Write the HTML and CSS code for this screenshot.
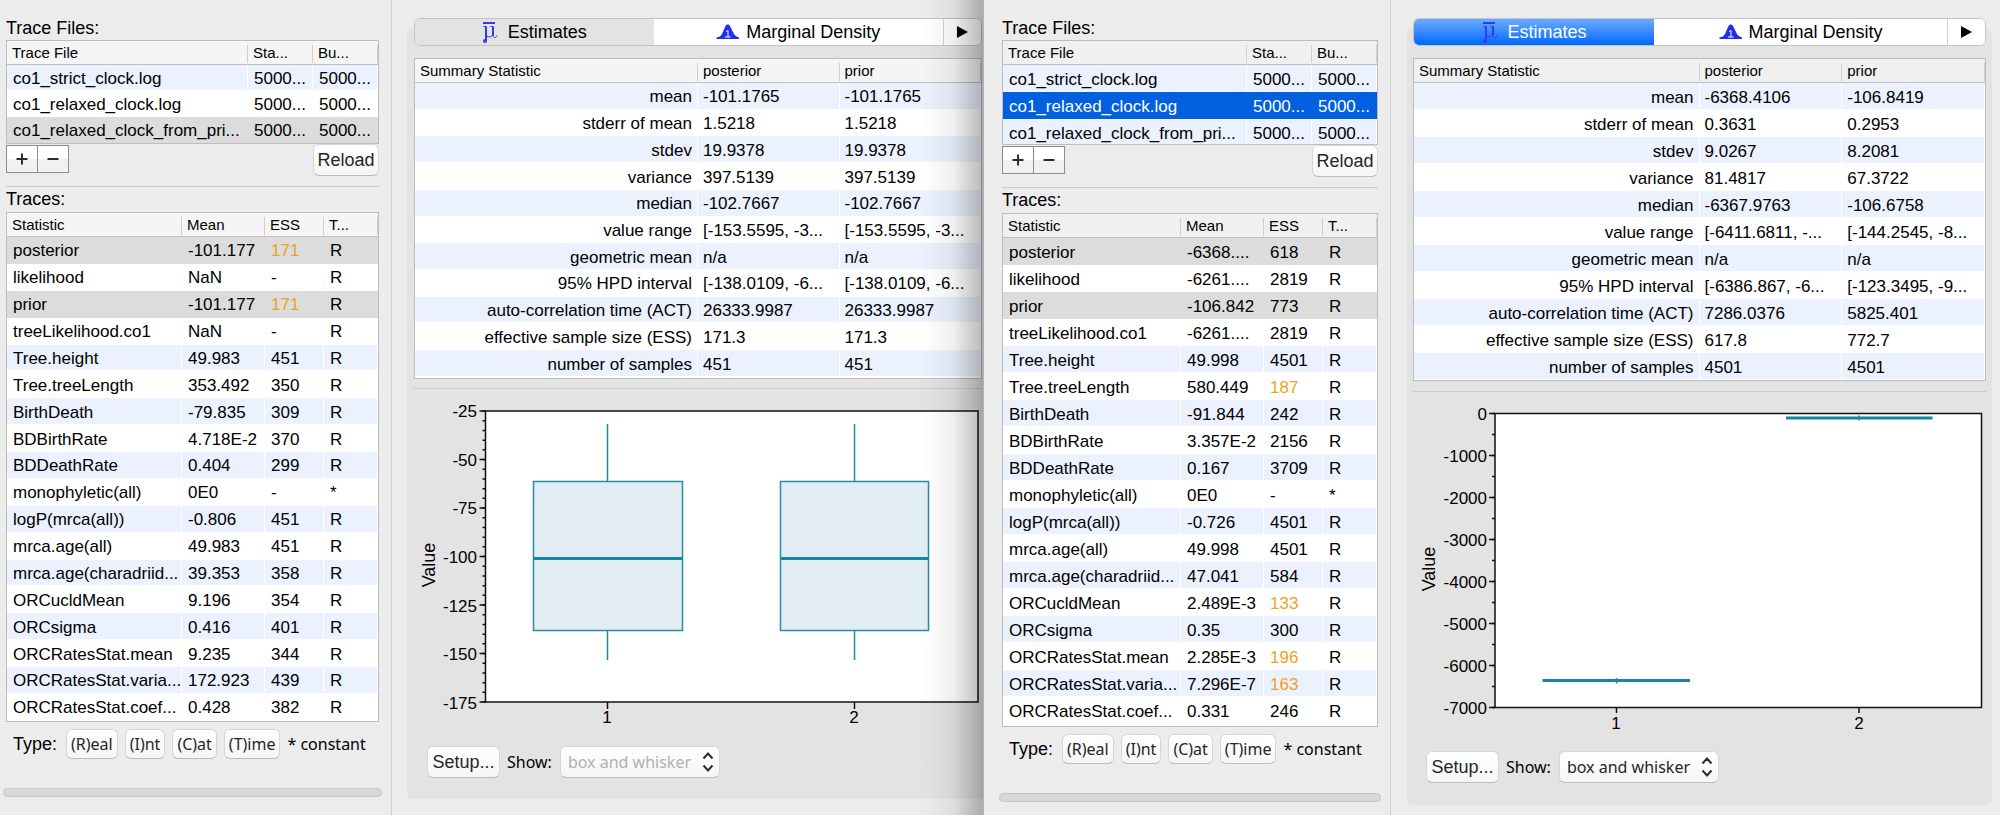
FILE: index.html
```html
<!DOCTYPE html>
<html lang="en">
<head>
<meta charset="utf-8">
<title>Tracer</title>
<link rel="stylesheet" href="styles.css">
</head>
<body>
<div class="desktop">
<section class="window window-back">
  <aside class="sidebar">
    <h2 class="label">Trace Files:</h2>
    <div class="box files">
      <table class="grid">
        <colgroup><col><col class="c65"><col class="c65"></colgroup>
        <thead><tr><th>Trace File</th><th>Sta...</th><th>Bu...</th></tr></thead>
        <tbody>
          <tr class="blue"><td>co1_strict_clock.log</td><td>5000...</td><td>5000...</td></tr>
          <tr><td>co1_relaxed_clock.log</td><td>5000...</td><td>5000...</td></tr>
          <tr class="gray"><td>co1_relaxed_clock_from_pri...</td><td>5000...</td><td>5000...</td></tr>
        </tbody>
      </table>
    </div>
    <div class="file-actions">
      <div class="plusminus">
        <button type="button" aria-label="Add"><svg width="12" height="12" viewBox="0 0 12 12"><path d="M0.500 6H11.500M6 0.500V11.500"/></svg></button>
        <button type="button" aria-label="Remove"><svg width="12" height="12" viewBox="0 0 12 12"><path d="M0.500 6H11.500"/></svg></button>
      </div>
      <button type="button" class="btn reload">Reload</button>
    </div>
    <hr class="rule">
    <h2 class="label traces-label">Traces:</h2>
    <div class="box traces">
      <table class="grid">
        <colgroup><col><col class="c83"><col class="c59"><col class="c54"></colgroup>
        <thead><tr><th>Statistic</th><th>Mean</th><th>ESS</th><th>T...</th></tr></thead>
        <tbody>
          <tr class="gray"><td>posterior</td><td>-101.177</td><td class="low">171</td><td>R</td></tr>
          <tr><td>likelihood</td><td>NaN</td><td>-</td><td>R</td></tr>
          <tr class="gray"><td>prior</td><td>-101.177</td><td class="low">171</td><td>R</td></tr>
          <tr><td>treeLikelihood.co1</td><td>NaN</td><td>-</td><td>R</td></tr>
          <tr class="blue"><td>Tree.height</td><td>49.983</td><td>451</td><td>R</td></tr>
          <tr><td>Tree.treeLength</td><td>353.492</td><td>350</td><td>R</td></tr>
          <tr class="blue"><td>BirthDeath</td><td>-79.835</td><td>309</td><td>R</td></tr>
          <tr><td>BDBirthRate</td><td>4.718E-2</td><td>370</td><td>R</td></tr>
          <tr class="blue"><td>BDDeathRate</td><td>0.404</td><td>299</td><td>R</td></tr>
          <tr><td>monophyletic(all)</td><td>0E0</td><td>-</td><td>*</td></tr>
          <tr class="blue"><td>logP(mrca(all))</td><td>-0.806</td><td>451</td><td>R</td></tr>
          <tr><td>mrca.age(all)</td><td>49.983</td><td>451</td><td>R</td></tr>
          <tr class="blue"><td>mrca.age(charadriid...</td><td>39.353</td><td>358</td><td>R</td></tr>
          <tr><td>ORCucldMean</td><td>9.196</td><td>354</td><td>R</td></tr>
          <tr class="blue"><td>ORCsigma</td><td>0.416</td><td>401</td><td>R</td></tr>
          <tr><td>ORCRatesStat.mean</td><td>9.235</td><td>344</td><td>R</td></tr>
          <tr class="blue"><td>ORCRatesStat.varia...</td><td>172.923</td><td>439</td><td>R</td></tr>
          <tr><td>ORCRatesStat.coef...</td><td>0.428</td><td>382</td><td>R</td></tr>
        </tbody>
      </table>
    </div>
    <div class="types">
      <span class="type-label">Type:</span>
      <button type="button" class="btn small">(R)eal</button>
      <button type="button" class="btn small">(I)nt</button>
      <button type="button" class="btn small">(C)at</button>
      <button type="button" class="btn small">(T)ime</button>
      <span class="constant">* constant</span>
    </div>
    <div class="progress" role="progressbar" aria-label="Progress"></div>
  </aside>
  <main class="main">
    <div class="group">
      <div class="tabs" role="tablist">
        <button type="button" class="tab selected" role="tab" aria-selected="true"><svg class="mu" width="16" height="23" viewBox="0 0 16 23"><path class="mu-bar" d="M1 2H13"/><path class="mu-stem" d="M4 5.500V20M11 5.500V14.500"/><path class="mu-fine" d="M1.500 5.500H4M8.500 5.500H11M4 13.500Q5 16.500 8 16Q10.500 15.500 11 13Q11 17 13.500 16.500Q14.500 16 15 14.500"/><circle cx="3" cy="20" r="2"/></svg>Estimates</button>
        <button type="button" class="tab" role="tab" aria-selected="false"><svg class="bell" width="24" height="16" viewBox="0 0 24 16"><path d="M0.500 15V13.500Q4.500 13 6 10L9 3Q9.600 1 11 0.500H12.500Q14 1 15 4L18 10Q19.500 13 23 13.500V15Z"/><path class="bell-cut" d="M9 13H14.500M12 13V6.500L10 7.500"/></svg>Marginal Density</button>
        <button type="button" class="tab more" aria-label="More tabs"><svg width="11" height="12" viewBox="0 0 11 12"><path d="M0 0L11 6L0 12Z"/></svg></button>
      </div>
      <div class="box stats">
        <table class="grid">
          <colgroup><col class="half"><col><col></colgroup>
          <thead><tr><th>Summary Statistic</th><th>posterior</th><th>prior</th></tr></thead>
          <tbody>
            <tr class="blue"><td>mean</td><td>-101.1765</td><td>-101.1765</td></tr>
            <tr><td>stderr of mean</td><td>1.5218</td><td>1.5218</td></tr>
            <tr class="blue"><td>stdev</td><td>19.9378</td><td>19.9378</td></tr>
            <tr><td>variance</td><td>397.5139</td><td>397.5139</td></tr>
            <tr class="blue"><td>median</td><td>-102.7667</td><td>-102.7667</td></tr>
            <tr><td>value range</td><td>[-153.5595, -3...</td><td>[-153.5595, -3...</td></tr>
            <tr class="blue"><td>geometric mean</td><td>n/a</td><td>n/a</td></tr>
            <tr><td>95% HPD interval</td><td>[-138.0109, -6...</td><td>[-138.0109, -6...</td></tr>
            <tr class="blue"><td>auto-correlation time (ACT)</td><td>26333.9987</td><td>26333.9987</td></tr>
            <tr><td>effective sample size (ESS)</td><td>171.3</td><td>171.3</td></tr>
            <tr class="blue"><td>number of samples</td><td>451</td><td>451</td></tr>
          </tbody>
        </table>
      </div>
      <hr class="rule">
      <svg class="chart" viewBox="0 0 568 348" role="img" aria-label="Box and whisker plot">
        <rect class="frame" x="71.500" y="22" width="492.500" height="291"/>
        <path class="ticks" stroke-width="6" stroke-dasharray="1.500 47" d="M68.500 21.300V314"/>
        <path class="ticks" stroke-width="3" stroke-dasharray="1.500 8.200" d="M70 21.300V314"/>
        <path class="axis" d="M193.500 313V320M440.500 313V320"/>
        <g class="tick-text">
          <text x="63" y="28">-25</text><text x="63" y="77">-50</text><text x="63" y="125">-75</text><text x="63" y="174">-100</text><text x="63" y="223">-125</text><text x="63" y="271">-150</text><text x="63" y="320">-175</text>
        </g>
        <g class="cat-text"><text x="193" y="334">1</text><text x="440" y="334">2</text></g>
        <text class="axis-title" transform="translate(21 176) rotate(-90)">Value</text>
        <path class="whisker" d="M193.500 35V271M440.500 35V271"/>
        <rect class="quartile" x="119.500" y="92.500" width="149" height="149"/>
        <rect class="quartile" x="366.500" y="92.500" width="148" height="149"/>
        <path class="median" d="M120 169.500H268M367 169.500H514"/>
      </svg>
      <div class="plot-controls">
        <button type="button" class="btn setup">Setup...</button>
        <label class="show" for="show-a">Show:</label>
        <div class="select"><select id="show-a" disabled><option>box and whisker</option></select><svg width="12" height="20" viewBox="0 0 12 20"><path d="M1.500 6.500L6 1.500L10.500 6.500M1.500 13.500L6 18.500L10.500 13.500"/></svg></div>
      </div>
    </div>
  </main>
  <div class="shade"></div>
</section>

<section class="window window-front">
  <aside class="sidebar">
    <h2 class="label">Trace Files:</h2>
    <div class="box files">
      <table class="grid">
        <colgroup><col><col class="c65"><col class="c65"></colgroup>
        <thead><tr><th>Trace File</th><th>Sta...</th><th>Bu...</th></tr></thead>
        <tbody>
          <tr class="blue"><td>co1_strict_clock.log</td><td>5000...</td><td>5000...</td></tr>
          <tr class="active"><td>co1_relaxed_clock.log</td><td>5000...</td><td>5000...</td></tr>
          <tr class="blue"><td>co1_relaxed_clock_from_pri...</td><td>5000...</td><td>5000...</td></tr>
        </tbody>
      </table>
    </div>
    <div class="file-actions">
      <div class="plusminus">
        <button type="button" aria-label="Add"><svg width="12" height="12" viewBox="0 0 12 12"><path d="M0.500 6H11.500M6 0.500V11.500"/></svg></button>
        <button type="button" aria-label="Remove"><svg width="12" height="12" viewBox="0 0 12 12"><path d="M0.500 6H11.500"/></svg></button>
      </div>
      <button type="button" class="btn reload">Reload</button>
    </div>
    <hr class="rule">
    <h2 class="label traces-label">Traces:</h2>
    <div class="box traces">
      <table class="grid">
        <colgroup><col><col class="c83"><col class="c59"><col class="c54"></colgroup>
        <thead><tr><th>Statistic</th><th>Mean</th><th>ESS</th><th>T...</th></tr></thead>
        <tbody>
          <tr class="gray"><td>posterior</td><td>-6368....</td><td>618</td><td>R</td></tr>
          <tr><td>likelihood</td><td>-6261....</td><td>2819</td><td>R</td></tr>
          <tr class="gray"><td>prior</td><td>-106.842</td><td>773</td><td>R</td></tr>
          <tr><td>treeLikelihood.co1</td><td>-6261....</td><td>2819</td><td>R</td></tr>
          <tr class="blue"><td>Tree.height</td><td>49.998</td><td>4501</td><td>R</td></tr>
          <tr><td>Tree.treeLength</td><td>580.449</td><td class="low">187</td><td>R</td></tr>
          <tr class="blue"><td>BirthDeath</td><td>-91.844</td><td>242</td><td>R</td></tr>
          <tr><td>BDBirthRate</td><td>3.357E-2</td><td>2156</td><td>R</td></tr>
          <tr class="blue"><td>BDDeathRate</td><td>0.167</td><td>3709</td><td>R</td></tr>
          <tr><td>monophyletic(all)</td><td>0E0</td><td>-</td><td>*</td></tr>
          <tr class="blue"><td>logP(mrca(all))</td><td>-0.726</td><td>4501</td><td>R</td></tr>
          <tr><td>mrca.age(all)</td><td>49.998</td><td>4501</td><td>R</td></tr>
          <tr class="blue"><td>mrca.age(charadriid...</td><td>47.041</td><td>584</td><td>R</td></tr>
          <tr><td>ORCucldMean</td><td>2.489E-3</td><td class="low">133</td><td>R</td></tr>
          <tr class="blue"><td>ORCsigma</td><td>0.35</td><td>300</td><td>R</td></tr>
          <tr><td>ORCRatesStat.mean</td><td>2.285E-3</td><td class="low">196</td><td>R</td></tr>
          <tr class="blue"><td>ORCRatesStat.varia...</td><td>7.296E-7</td><td class="low">163</td><td>R</td></tr>
          <tr><td>ORCRatesStat.coef...</td><td>0.331</td><td>246</td><td>R</td></tr>
        </tbody>
      </table>
    </div>
    <div class="types">
      <span class="type-label">Type:</span>
      <button type="button" class="btn small">(R)eal</button>
      <button type="button" class="btn small">(I)nt</button>
      <button type="button" class="btn small">(C)at</button>
      <button type="button" class="btn small">(T)ime</button>
      <span class="constant">* constant</span>
    </div>
    <div class="progress" role="progressbar" aria-label="Progress"></div>
  </aside>
  <main class="main">
    <div class="group">
      <div class="tabs" role="tablist">
        <button type="button" class="tab selected" role="tab" aria-selected="true"><svg class="mu" width="16" height="23" viewBox="0 0 16 23"><path class="mu-bar" d="M1 2H13"/><path class="mu-stem" d="M4 5.500V20M11 5.500V14.500"/><path class="mu-fine" d="M1.500 5.500H4M8.500 5.500H11M4 13.500Q5 16.500 8 16Q10.500 15.500 11 13Q11 17 13.500 16.500Q14.500 16 15 14.500"/><circle cx="3" cy="20" r="2"/></svg>Estimates</button>
        <button type="button" class="tab" role="tab" aria-selected="false"><svg class="bell" width="24" height="16" viewBox="0 0 24 16"><path d="M0.500 15V13.500Q4.500 13 6 10L9 3Q9.600 1 11 0.500H12.500Q14 1 15 4L18 10Q19.500 13 23 13.500V15Z"/><path class="bell-cut" d="M9 13H14.500M12 13V6.500L10 7.500"/></svg>Marginal Density</button>
        <button type="button" class="tab more" aria-label="More tabs"><svg width="11" height="12" viewBox="0 0 11 12"><path d="M0 0L11 6L0 12Z"/></svg></button>
      </div>
      <div class="box stats">
        <table class="grid">
          <colgroup><col class="half"><col><col></colgroup>
          <thead><tr><th>Summary Statistic</th><th>posterior</th><th>prior</th></tr></thead>
          <tbody>
            <tr class="blue"><td>mean</td><td>-6368.4106</td><td>-106.8419</td></tr>
            <tr><td>stderr of mean</td><td>0.3631</td><td>0.2953</td></tr>
            <tr class="blue"><td>stdev</td><td>9.0267</td><td>8.2081</td></tr>
            <tr><td>variance</td><td>81.4817</td><td>67.3722</td></tr>
            <tr class="blue"><td>median</td><td>-6367.9763</td><td>-106.6758</td></tr>
            <tr><td>value range</td><td>[-6411.6811, -...</td><td>[-144.2545, -8...</td></tr>
            <tr class="blue"><td>geometric mean</td><td>n/a</td><td>n/a</td></tr>
            <tr><td>95% HPD interval</td><td>[-6386.867, -6...</td><td>[-123.3495, -9...</td></tr>
            <tr class="blue"><td>auto-correlation time (ACT)</td><td>7286.0376</td><td>5825.401</td></tr>
            <tr><td>effective sample size (ESS)</td><td>617.8</td><td>772.7</td></tr>
            <tr class="blue"><td>number of samples</td><td>4501</td><td>4501</td></tr>
          </tbody>
        </table>
      </div>
      <hr class="rule">
      <svg class="chart" viewBox="0 0 573 350" role="img" aria-label="Box and whisker plot">
        <rect class="frame" x="82" y="21.500" width="486.500" height="294"/>
        <path class="ticks" stroke-width="6" stroke-dasharray="1.500 40.500" d="M79 20.800V316.500"/>
        <path class="ticks" stroke-width="3" stroke-dasharray="1.500 19.500" d="M80.500 20.800V316.500"/>
        <path class="axis" d="M203.500 315V321M446 315V321"/>
        <g class="tick-text">
          <text x="74" y="28">0</text><text x="74" y="70">-1000</text><text x="74" y="112">-2000</text><text x="74" y="154">-3000</text><text x="74" y="196">-4000</text><text x="74" y="238">-5000</text><text x="74" y="280">-6000</text><text x="74" y="322">-7000</text>
        </g>
        <g class="cat-text"><text x="203" y="337">1</text><text x="446" y="337">2</text></g>
        <text class="axis-title" transform="translate(22 177) rotate(-90)">Value</text>
        <path class="whisker" d="M203.500 286V291.500M446 23.500V28.500"/>
        <path class="median" d="M129.500 288.500H277M373 26H519.500"/>
      </svg>
      <div class="plot-controls">
        <button type="button" class="btn setup">Setup...</button>
        <label class="show" for="show-b">Show:</label>
        <div class="select"><select id="show-b"><option>box and whisker</option></select><svg width="12" height="20" viewBox="0 0 12 20"><path d="M1.500 6.500L6 1.500L10.500 6.500M1.500 13.500L6 18.500L10.500 13.500"/></svg></div>
      </div>
    </div>
  </main>
</section>
</div>
</body>
</html>
```

FILE: styles.css
```css
* { box-sizing: border-box; }

body {
  margin: 0;
  background: #ececec;
  color: #000;
  font-family: "Liberation Sans", Arial, sans-serif;
  font-size: 17px;
}

button, select { font-family: inherit; margin: 0; }

.desktop {
  display: grid;
  grid-template-columns: 983fr 1017fr;
  min-height: 100vh;
}

.window {
  position: relative;
  display: grid;
  min-width: 0;
  background: #ececec;
}
.window-back { grid-template-columns: 392px minmax(0, 1fr); overflow: hidden; }
.window-front { grid-template-columns: 407px minmax(0, 1fr); border-left: 1px solid #b4b4b4; }

.shade {
  position: absolute;
  inset: 0 0 0 auto;
  width: 60px;
  pointer-events: none;
  background: linear-gradient(to right, rgba(0,0,0,0), rgba(0,0,0,0.060) 50%, rgba(0,0,0,0.280));
}

.sidebar {
  padding: 17px 12px 0 6px;
  border-right: 1px solid #d0d0d0;
}
.window-front .sidebar { padding-left: 18px; }

.label {
  margin: 0;
  font-size: 18px;
  font-weight: normal;
  line-height: 23px;
}

.box {
  border: 1px solid #bdbdbd;
  background: #fff;
  overflow: hidden;
}
.window-front .files { height: 105px; }
.window-back .stats { padding-bottom: 1px; }
.window-front .traces { padding-bottom: 2px; }

.grid {
  width: 100%;
  table-layout: fixed;
  border-collapse: separate;
  border-spacing: 0;
}
.c65 { width: 65px; }
.c83 { width: 83px; }
.c59 { width: 59px; }
.c54 { width: 54px; }
.half { width: 50%; }

.grid th, .grid td {
  padding: 0 0 0 6px;
  overflow: hidden;
  white-space: nowrap;
  text-align: left;
}
.grid th {
  height: 24px;
  padding-left: 5px;
  font-size: 15px;
  font-weight: normal;
  line-height: 23px;
  border-bottom: 1px solid #c0c0c0;
  background: linear-gradient(#cfcfcf, #cfcfcf) right 4px / 1px 18px no-repeat #f5f5f5;
}
.window-front .grid th { background-color: #f0f0f0; }
.grid td {
  height: 26px;
  padding-top: 3px;
  line-height: 22px;
  border-right: 1px solid #fff;
  border-bottom: 1px solid #fff;
}
.window-front .grid td { height: 27px; }
.window-back .traces .grid { height: 508px; }
.window-back .stats .grid { height: 318px; }

.blue td { background: #ebf1fe; background-clip: padding-box; }
.gray td { background: #dcdcdc; border-color: #dcdcdc; }
.active td { background: #0060df; border-color: #0060df; color: #fff; }
.grid .low { color: #eba31f; }

.stats .grid td { padding-left: 5px; padding-right: 5px; }
.stats .grid td:first-child { text-align: right; }

.file-actions {
  display: flex;
  justify-content: space-between;
  align-items: flex-start;
  padding-bottom: 10px;
}
.plusminus { display: flex; padding-top: 1px; }
.plusminus button {
  display: flex;
  align-items: center;
  justify-content: center;
  width: 32px;
  height: 28px;
  padding: 0;
  border: 1px solid #8c8c8c;
  background: linear-gradient(#fff 50%, #f1f1f1 50%);
}
.plusminus button + button { margin-left: -1px; }
.plusminus path { stroke: #2c2c2c; stroke-width: 2; fill: none; }

.btn {
  border: 1px solid #d6d6d6;
  border-bottom-color: #bcbcbc;
  border-radius: 6px;
  background: linear-gradient(#fff, #f5f5f5);
  color: #262626;
  padding: 0;
  font-size: 18px;
}
.reload { width: 66px; height: 32px; }

.rule {
  height: 1px;
  margin: 0;
  border: 0;
  background: #cbcbcb;
}
.traces-label { line-height: 25px; }

.types {
  display: flex;
  align-items: center;
  gap: 7px;
  padding: 7px 0 0 7px;
  height: 37px;
}
.type-label { width: 46px; font-size: 18px; }
.small {
  height: 30px;
  padding: 0 4px;
  font-family: "Noto Sans", sans-serif;
  font-size: 16px;
}
.constant { font-family: "Noto Sans", sans-serif; font-size: 16px; }

.progress {
  height: 9px;
  margin: 29px -3px 0;
  border: 1px solid #c6c6c6;
  border-radius: 5px;
  background: #d8d8d8;
}

.main { padding: 28px 0 0 15px; min-width: 0; }
.window-front .main { padding: 28px 8px 0 16px; }

.group {
  display: flow-root;
  padding: 0 1px 21px 7px;
  border-radius: 6px 0 0 6px;
  background: #e3e3e3;
}
.window-front .group { padding: 0 6px 22px; border-radius: 6px; }

.tabs {
  display: grid;
  grid-template-columns: 240fr 291fr 38px;
  height: 28px;
  margin-top: -10px;
  margin-bottom: 12px;
  border: 1px solid #c4c4c4;
  border-radius: 6px;
  background: #fff;
  overflow: hidden;
}
.window-front .tabs { grid-template-columns: 241fr 294fr 38px; }
.tab {
  display: flex;
  align-items: center;
  justify-content: center;
  gap: 6px;
  padding: 0;
  border: 0;
  background: #fff;
  color: #000;
  font-size: 18px;
  white-space: nowrap;
}
.tab svg { flex: none; }
.more { border-left: 1px solid #d4d4d4; }
.window-back .selected { background: #e3e3e3; }
.window-front .selected { background: linear-gradient(#6cabff, #0068ff); color: #fff; }

.mu { fill: #2c3cf5; margin-right: 4px; }
.mu path { fill: none; stroke: #2c3cf5; }
.mu .mu-bar { stroke-width: 2; }
.mu .mu-stem { stroke-width: 2; }
.mu .mu-fine { stroke-width: 1; }
.bell { fill: #1f2ff0; }
.bell .bell-cut { fill: none; stroke: #fff; stroke-width: 1; }

.stats + .rule { margin-top: 9px; }
.window-front .stats + .rule { margin-top: 10px; }

.chart { display: block; width: 100%; height: auto; }
.frame { fill: #fff; stroke: #111; stroke-width: 1.500; }
.ticks { fill: none; stroke: #111; }
.axis { fill: none; stroke: #111; stroke-width: 1.500; }
.tick-text { font-size: 17px; text-anchor: end; }
.cat-text { font-size: 17px; text-anchor: middle; }
.axis-title { font-size: 18px; text-anchor: middle; }
.whisker { fill: none; stroke: #1b8aa5; stroke-width: 1.500; }
.quartile { fill: #e3eef4; stroke: #2a8ca6; stroke-width: 1.500; }
.median { fill: none; stroke: #1587a3; stroke-width: 3; }

.plot-controls {
  display: flex;
  align-items: center;
  padding: 9px 0 0 13px;
}
.setup { width: 73px; height: 32px; }
.show {
  margin: 0 8px 0 7px;
  font-family: "Noto Sans", sans-serif;
  font-size: 16px;
}
.select { position: relative; }
.select select {
  appearance: none;
  width: 160px;
  height: 32px;
  padding: 0 22px 0 7px;
  border: 1px solid #d6d6d6;
  border-bottom-color: #bcbcbc;
  border-radius: 6px;
  background: linear-gradient(#fff, #f5f5f5);
  color: #262626;
  font-family: "Noto Sans", sans-serif;
  font-size: 16px;
}
.select select:disabled { color: #b0b0b0; opacity: 1; }
.select svg {
  position: absolute;
  right: 6px;
  top: 6px;
  pointer-events: none;
}
.select path { fill: none; stroke: #2c2c2c; stroke-width: 2; }
```
